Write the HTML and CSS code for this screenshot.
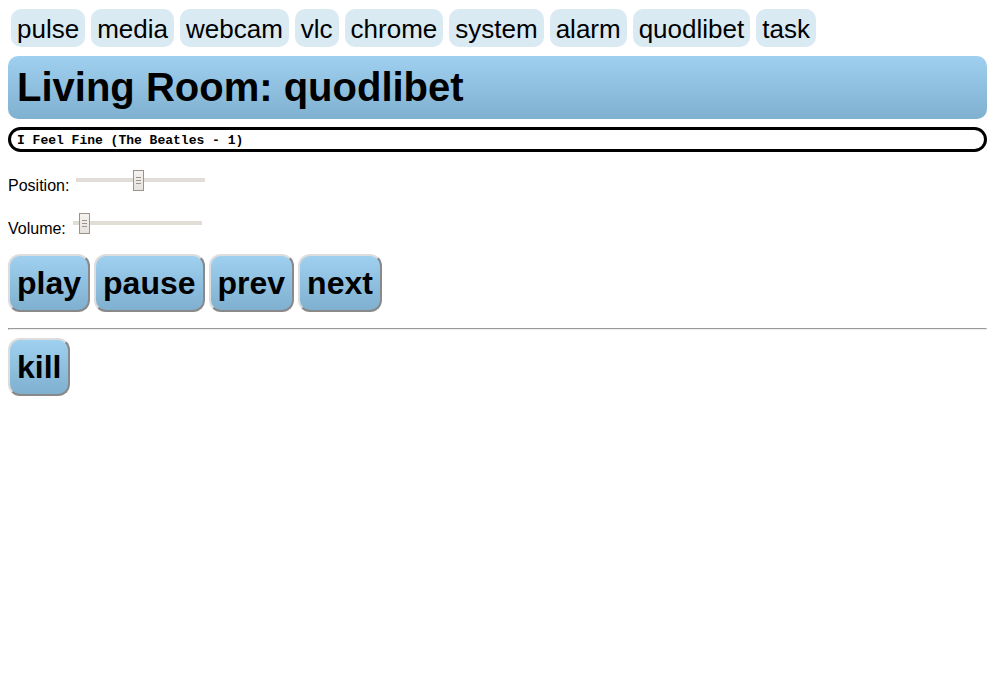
FILE: index.html
```html
<!DOCTYPE html>
<html lang="en">
<head>
<meta charset="utf-8">
<title>Living Room: quodlibet</title>
<link rel="stylesheet" href="styles.css">
</head>
<body>
<nav class="modules">
<a href="#pulse">pulse</a>
<a href="#media">media</a>
<a href="#webcam">webcam</a>
<a href="#vlc">vlc</a>
<a href="#chrome">chrome</a>
<a href="#system">system</a>
<a href="#alarm">alarm</a>
<a href="#quodlibet">quodlibet</a>
<a href="#task">task</a>
</nav>
<h1 class="title">Living Room: quodlibet</h1>
<div class="song">I Feel Fine (The Beatles - 1)</div>
<div class="controls">
<div class="control">
<label for="position">Position:</label>
<input type="range" id="position" min="0" max="118" value="57">
</div>
<div class="control">
<label for="volume">Volume:</label>
<input type="range" id="volume" min="0" max="118" value="6">
</div>
</div>
<div class="buttons">
<button type="button">play</button>
<button type="button">pause</button>
<button type="button">prev</button>
<button type="button">next</button>
</div>
<hr class="rule">
<div class="buttons">
<button type="button">kill</button>
</div>
</body>
</html>
```
FILE: styles.css
```css
body {
  margin: 8px;
  background: #fff;
  color: #000;
  font: 16px/18px "Liberation Sans", Arial, sans-serif;
}

.modules {
  display: flex;
  flex-wrap: wrap;
  gap: 6px;
  padding: 1px 3px 9px;
}

.modules a {
  padding: 5px 6px 3px;
  border-radius: 10px;
  background: #daeaf3;
  color: #000;
  font-size: 26px;
  line-height: 30px;
  text-decoration: none;
}

.title {
  margin: 0 0 8px;
  padding: 8px 9px;
  border-radius: 10px;
  background: linear-gradient(#a0d0f0, #80b0d0);
  font-size: 40px;
  line-height: 47px;
}

.song {
  margin-bottom: 18px;
  padding: 3px 6px 1px;
  border: 3px solid #000;
  border-radius: 13px;
  font: bold 13px/15px "Liberation Mono", "Courier New", monospace;
}

.controls {
  display: grid;
  gap: 18px;
  margin-bottom: 16px;
}

.control {
  display: flex;
  align-items: flex-start;
  gap: 7px;
}

.control label {
  padding-top: 7px;
}

.control input {
  appearance: none;
  width: 129px;
  height: 21px;
  margin: 0;
  background: linear-gradient(#e1ddd7, #e1ddd7) 0 8px / 100% 4px no-repeat;
}

.control input::-webkit-slider-thumb {
  appearance: none;
  box-sizing: border-box;
  width: 11px;
  height: 21px;
  border: 1px solid #9b948d;
  background:
    linear-gradient(#9b948d, #9b948d) 2px 6px / 5px 1px no-repeat,
    linear-gradient(#9b948d, #9b948d) 2px 9px / 5px 1px no-repeat,
    linear-gradient(#9b948d, #9b948d) 2px 12px / 5px 1px no-repeat,
    linear-gradient(#f5f2ef, #e6e2dd);
}

.buttons {
  display: flex;
  flex-wrap: wrap;
  gap: 4px;
}

.buttons button {
  padding: 8px 7px;
  border: 2px outset #ddd;
  border-radius: 12px;
  background: linear-gradient(#a0d0f0, #80b0d0);
  color: #000;
  font: bold 32px/38px "Liberation Sans", Arial, sans-serif;
}

.rule {
  margin: 16px 0 8px;
  border: 1px inset #eee;
}
```
